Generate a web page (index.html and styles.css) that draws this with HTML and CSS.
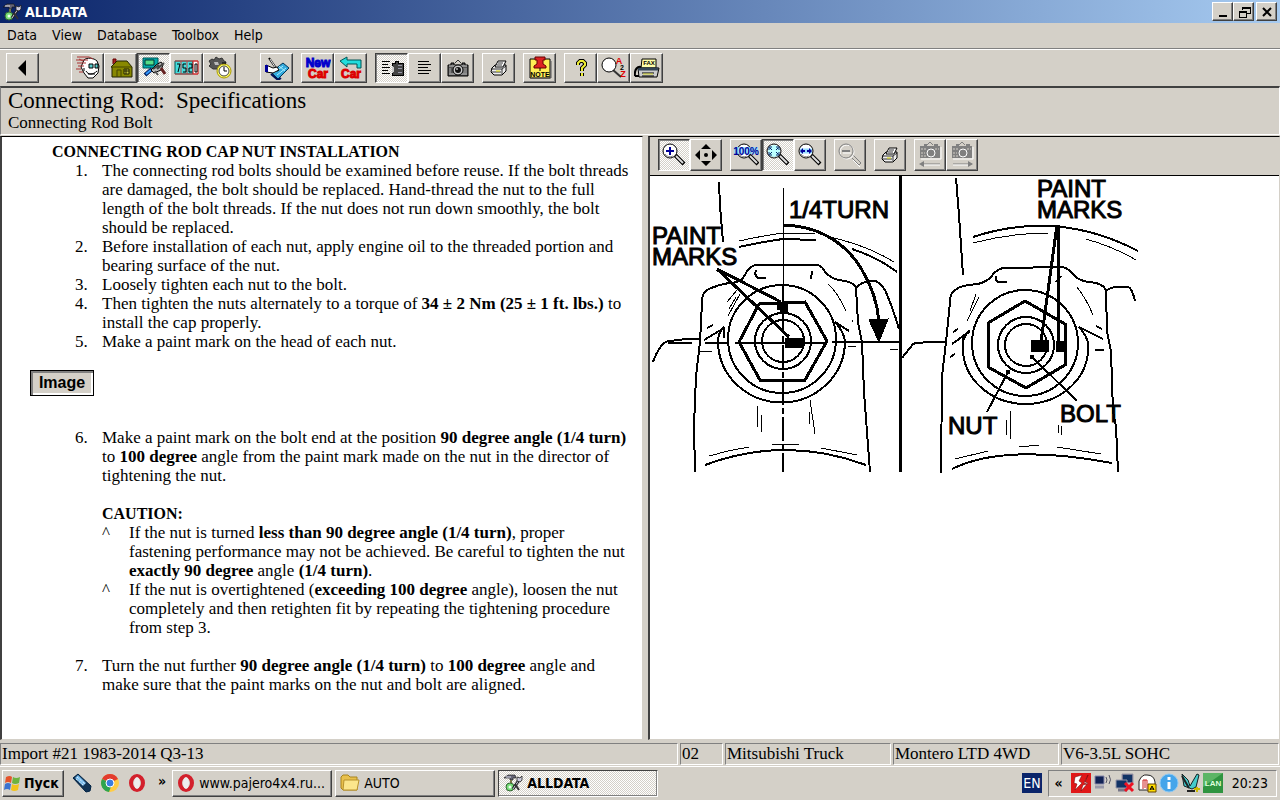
FILE: index.html
```html
<!DOCTYPE html>
<html lang="en">
<head>
    <meta charset="UTF-8">
    <meta name="viewport" content="width=device-width, initial-scale=1.0">
    <title>ALLDATA</title>
    <link rel="stylesheet" href="styles.css">
</head>
<body>
    <!-- shared icon shapes -->
    <svg class="defs" width="0" height="0" aria-hidden="true">
        <symbol id="tools" viewBox="0 0 20 18">
            <path d="M1 4l4-3h7l1 3h-3v2H7V4z" fill="#667" stroke="#111" stroke-width=".6"/>
            <path d="M3 3h5" stroke="#dde"/>
            <path d="M7 6h2v6H7z" fill="#774"/>
            <circle cx="7" cy="13" r="4" fill="#7d7" stroke="#363"/>
            <circle cx="7" cy="13" r="1.5" fill="#efe"/>
            <path d="M10 15l6-9" stroke="#222" stroke-width="3"/>
            <path d="M10 15l6-9" stroke="#ccd" stroke-width="1"/>
            <path d="M14 3v4l3 1 2-2V2l-2 2z" fill="#ccd" stroke="#222" stroke-width=".8"/>
            <path d="M12 10l4 6" stroke="#333" stroke-width="2"/>
        </symbol>
        <symbol id="lens" viewBox="0 0 24 24">
            <path d="M13 12l9 9" stroke="#000" stroke-width="4"/>
            <path d="M14 13l7 7" stroke="#ddd" stroke-width="2"/>
            <circle cx="8" cy="8" r="7" fill="#fff" stroke="#000"/>
            <path d="M3 11a6 6 0 0 0 8 2" fill="none" stroke="#888"/>
        </symbol>
        <symbol id="printer" viewBox="0 0 18 16">
            <path d="M2 8l3-3h11v6l-4 4H4l-3-3z" fill="#eee" stroke="#000"/>
            <path d="M5 7l3-6h8l-3 6z" fill="#fff" stroke="#000"/>
            <path d="M8 3h5M7 5h5M1 9h11v5M12 9l4-3M2 12h9" fill="none" stroke="#000" stroke-width=".8"/>
            <path d="M6 11h4" stroke="#dd0" stroke-width="1"/>
        </symbol>
        <symbol id="camera" viewBox="0 0 22 18">
            <path d="M8 4l3-3 3 3" fill="none" stroke="#333"/>
            <path d="M1 6h3V4h3v2h8V4h3v2h3v11H1z" fill="#555" stroke="#000"/>
            <path d="M2 7h18M2 15h18" stroke="#ccc"/>
            <path d="M3 9v5M17 9v5M19 9v5" stroke="#aaa"/>
            <circle cx="11" cy="11" r="5" fill="#ccc" stroke="#000"/>
            <circle cx="11" cy="11" r="3" fill="#111"/>
            <path d="M9 10h2" stroke="#fff"/>
        </symbol>
        <symbol id="camera-off" viewBox="0 0 24 24">
            <path d="M9 4l3-3 3 3" fill="none" stroke="#808080"/>
            <path d="M2 5h4V3h3v2h7V3h4v2h2v12H2z" fill="#808080"/>
            <path d="M3 8h5M3 12h4M3 15h5M17 8h4" stroke="#d4d0c8" stroke-dasharray="2 1"/>
            <circle cx="13" cy="12" r="4" fill="none" stroke="#fff"/>
            <path d="M3 18h20V6" fill="none" stroke="#fff"/>
        </symbol>
        <symbol id="opera" viewBox="0 0 18 18">
            <ellipse cx="9" cy="9" rx="6" ry="7" fill="none" stroke="#d3202c" stroke-width="4"/>
            <ellipse cx="9" cy="9" rx="3" ry="6" fill="#eee"/>
        </symbol>
        <symbol id="pcs" viewBox="0 0 20 20">
            <path d="M7 1h11v9H7z" fill="#557" stroke="#99a"/>
            <path d="M8 2h9v7H8z" fill="#136"/>
            <path d="M1 7h11v8H1z" fill="#136" stroke="#99a"/>
            <path d="M3 17h9" stroke="#778" stroke-width="3"/>
        </symbol>
    </svg>

    <header class="titlebar">
        <svg class="app-icon" width="20" height="18"><use href="#tools"/></svg>
        <span class="title">ALLDATA</span>
        <div class="window-buttons">
            <button class="win" aria-label="Minimize"><svg width="14" height="12"><path d="M3 10h8" stroke="#000" stroke-width="2"/></svg></button>
            <button class="win" aria-label="Restore"><svg width="14" height="12" shape-rendering="crispEdges"><path d="M5 4V1h8v6h-3M5 2h8M2 5h7v6H2zM2 6h7" fill="none" stroke="#000"/></svg></button>
            <button class="win close" aria-label="Close"><svg width="14" height="12"><path d="M3 2l8 8M11 2l-8 8" stroke="#000" stroke-width="2"/></svg></button>
        </div>
    </header>

    <nav class="menubar">
        <button>Data</button>
        <button>View</button>
        <button>Database</button>
        <button>Toolbox</button>
        <button>Help</button>
    </nav>

    <div class="toolbar">
        <div class="group spaced back">
            <button class="tool" aria-label="Back"><svg width="26" height="24"><path d="M8 12l8-8v16z"/></svg></button>
        </div>
        <div class="group spaced">
            <button class="tool" aria-label="Customer">
                <svg width="26" height="24">
                    <path d="M9 4c3-3 10-2 13 1l2 5-1 7-5 5h-5l-4-5-3-6z" fill="#fff" stroke="#000"/>
                    <path d="M2 1h12l4 2M1 4h12M2 7h9M3 10h6M1 13h5M4 16h4M4 3l4 2" stroke="#a33" fill="none"/>
                    <path d="M14 8h4v4h-4zM20 8h3v4h-3z" fill="#5cc" stroke="#000"/>
                    <path d="M11 15c2 4 7 4 11 0M13 18h7M9 12v3" stroke="#000" fill="none"/>
                </svg>
            </button>
            <button class="tool" aria-label="Shop">
                <svg width="26" height="24">
                    <path d="M5 8V3h3v3" fill="#a22" stroke="#600"/>
                    <path d="M3 11l6-6h10l5 6v10H4V11z" fill="#880" stroke="#220"/>
                    <path d="M3 11h21M9 21v-7h4v7" fill="none" stroke="#440"/>
                    <path d="M16 13h5v5h-5zM18 13v5M16 15h5" fill="#cc4" stroke="#220"/>
                </svg>
            </button>
            <button class="tool on" aria-label="Diagnostics">
                <svg width="26" height="24">
                    <path d="M2 2h15v10H2z" fill="#0aa" stroke="#055"/>
                    <path d="M4 4h9v5H4z" fill="#5d8" stroke="#033"/>
                    <path d="M4 19l7-6" stroke="#026" stroke-width="4"/>
                    <path d="M5 18l5-4" stroke="#39f" stroke-width="2"/>
                    <path d="M10 14l5-5 5-3 2 3-2 5-7 3z" fill="#bbb" stroke="#000"/>
                    <path d="M12 13l6-4M16 13l7-6" stroke="#444" stroke-width="2"/>
                    <path d="M20 12l4 6" stroke="#622" stroke-width="3"/>
                    <path d="M14 15l3 4" stroke="#555" stroke-width="2"/>
                </svg>
            </button>
            <button class="tool" aria-label="Codes 7520">
                <svg width="26" height="24">
                    <path d="M1 5h18v13H1z" fill="#4dd" stroke="#055"/>
                    <path d="M19 5h5v13h-5z" fill="#fff" stroke="#c00"/>
                    <path d="M7 5v13M13 5v13M1 5h23M1 18h23" stroke="#c44"/>
                    <path d="M3 8h3l-2 8M12 8H9v4h3v4H9M15 8h3v4h-3v4h3M21 8h2v8h-2z" fill="none" stroke="#000"/>
                </svg>
            </button>
            <button class="tool" aria-label="Labor times">
                <svg width="26" height="24">
                    <path d="M2 5l3-2 2 1 2-3 3 2 3-1 2 3 2 1-1 4-4 3H6L2 10l2-2z" fill="#555" stroke="#333"/>
                    <path d="M7 6h4l1 3H8z" fill="#bbb"/>
                    <circle cx="17" cy="15" r="7" fill="#ff6" stroke="#a90"/>
                    <circle cx="17" cy="15" r="5" fill="#fff" stroke="#444"/>
                    <path d="M17 11v4h3M15 7h4" fill="none" stroke="#000"/>
                </svg>
            </button>
        </div>
        <div class="group">
            <button class="tool" aria-label="Notes">
                <svg width="26" height="24">
                    <path d="M7 16l12-9 6 5-11 11z" fill="#3ad" stroke="#035"/>
                    <path d="M10 17l9-7M13 19l9-7M15 10l6 5" stroke="#aef"/>
                    <path d="M14 15L5 2" stroke="#000" stroke-width="2"/>
                    <path d="M13 14L6 3" stroke="#eee"/>
                    <path d="M2 9l7 3 4-1 2 3-6 3-7-1z" fill="#fff" stroke="#000"/>
                    <path d="M1 9h3v7H1z" fill="#009"/>
                    <path d="M7 18l7 6 3-2" fill="none" stroke="#015" stroke-width="2"/>
                </svg>
            </button>
        </div>
        <div class="group">
            <button class="tool" aria-label="New Car">
                <svg width="26" height="26">
                    <text class="new" x="13" y="12">New</text>
                    <text class="car" x="13" y="23">Car</text>
                </svg>
            </button>
            <button class="tool" aria-label="Previous Car">
                <svg width="26" height="26">
                    <path d="M2 6l7-4v3h14v8h-4V9H9v3z" fill="#2dd" stroke="#055"/>
                    <text class="car" x="13" y="23">Car</text>
                </svg>
            </button>
        </div>
        <div class="group">
            <button class="tool on" aria-label="Text and images">
                <svg width="26" height="24" shape-rendering="crispEdges">
                    <path d="M3 5h8M3 8h6M3 11h8M3 14h6M3 17h8" stroke="#000"/>
                    <path d="M13 7h3V5h3v2h5v12H13z" fill="#444" stroke="#000"/>
                    <path d="M13 10a4 4 0 0 1 0 7z" fill="#ccc"/>
                    <path d="M19 9h4M19 12h4M19 16h4" stroke="#99a"/>
                </svg>
            </button>
            <button class="tool" aria-label="Text only">
                <svg width="26" height="24" shape-rendering="crispEdges"><path d="M6 5h11M6 8h13M6 11h10M6 14h13M6 17h11" stroke="#000"/></svg>
            </button>
            <button class="tool" aria-label="Images only"><svg width="22" height="18"><use href="#camera"/></svg></button>
        </div>
        <div class="group">
            <button class="tool" aria-label="Print"><svg width="18" height="16"><use href="#printer"/></svg></button>
        </div>
        <div class="group">
            <button class="tool" aria-label="Note">
                <svg width="26" height="24">
                    <path d="M3 3h20v19H3z" fill="#fe5" stroke="#000"/>
                    <path d="M4 22h20V5" fill="none" stroke="#555"/>
                    <path d="M8 1h10v3h-2v4l3 2v2H7v-2l3-2V4H8z" fill="#d22" stroke="#600"/>
                    <path d="M13 12v3" stroke="#000"/>
                    <text class="note" x="13" y="21">NOTE</text>
                </svg>
            </button>
        </div>
        <div class="group">
            <button class="tool" aria-label="Help">
                <svg width="26" height="24">
                    <path d="M10 9V7l2-2h3l2 2v2l-3 3v3M14 17v3" fill="none" stroke="#000" stroke-width="4"/>
                    <path d="M10 9V7l2-2h3l2 2v2l-3 3v3M14 17v3" fill="none" stroke="#ee3" stroke-width="2"/>
                </svg>
            </button>
            <button class="tool" aria-label="Search A to Z">
                <svg width="26" height="24">
                    <path d="M12 14l8 7" stroke="#333" stroke-width="2"/>
                    <circle cx="8" cy="9" r="7" fill="#fff" stroke="#000"/>
                    <text class="az" x="18" y="8">A</text>
                    <text class="two" x="21" y="14">2</text>
                    <text class="az" x="22" y="21">Z</text>
                </svg>
            </button>
            <button class="tool" aria-label="Fax">
                <svg width="26" height="24">
                    <path d="M8 3h14v9H7z" fill="#ffa" stroke="#000"/>
                    <text class="fax" x="15" y="9">FAX</text>
                    <path d="M4 12h21l-2 9H5z" fill="#ccc" stroke="#000"/>
                    <path d="M4 13h20" stroke="#345" stroke-width="3"/>
                    <path d="M8 17h12M8 20h12" stroke="#000"/>
                    <path d="M9 18h10" stroke="#dd3"/>
                    <path d="M1 20c-1-7 3-10 6-9M1 20h4" fill="none" stroke="#000" stroke-width="2"/>
                </svg>
            </button>
        </div>
    </div>

    <div class="heading">
        <h1>Connecting Rod:&nbsp; Specifications</h1>
        <p>Connecting Rod Bolt</p>
    </div>

    <main class="panes">
        <article class="doc">
            <h2>CONNECTING ROD CAP NUT INSTALLATION</h2>
            <ol class="steps">
                <li><p>The connecting rod bolts should be examined before reuse. If the bolt threads are damaged, the bolt should be replaced. Hand-thread the nut to the full length of the bolt threads. If the nut does not run down smoothly, the bolt should be replaced.</p></li>
                <li><p>Before installation of each nut, apply engine oil to the threaded portion and bearing surface of the nut.</p></li>
                <li><p>Loosely tighten each nut to the bolt.</p></li>
                <li><p>Then tighten the nuts alternately to a torque of <b>34 ± 2 Nm (25 ± 1 ft. lbs.)</b> to install the cap properly.</p></li>
                <li><p>Make a paint mark on the head of each nut.</p></li>
            </ol>
            <button class="image-button">Image</button>
            <ol class="steps from-six">
                <li>
                    <div>
                        <p>Make a paint mark on the bolt end at the position <b>90 degree angle (1/4 turn)</b> to <b>100 degree</b> angle from the paint mark made on the nut in the director of tightening the nut.</p>
                        <h3>CAUTION:</h3>
                        <ul class="carets">
                            <li><p>If the nut is turned <b>less than 90 degree angle (1/4 turn)</b>, proper fastening performance may not be achieved. Be careful to tighten the nut <b>exactly 90 degree</b> angle <b>(1/4 turn)</b>.</p></li>
                            <li><p>If the nut is overtightened (<b>exceeding 100 degree</b> angle), loosen the nut completely and then retighten fit by repeating the tightening procedure from step 3.</p></li>
                        </ul>
                    </div>
                </li>
                <li><p>Turn the nut further <b>90 degree angle (1/4 turn)</b> to <b>100 degree</b> angle and make sure that the paint marks on the nut and bolt are aligned.</p></li>
            </ol>
        </article>

        <section class="viewer">
            <div class="viewer-bar">
                <div class="group">
                    <button class="tool" aria-pressed="true" aria-label="Zoom in"><svg width="24" height="24"><use href="#lens"/><path d="M4 8h8M8 4v8" stroke="#009" stroke-width="2"/></svg></button>
                    <button class="tool" aria-label="Pan"><svg width="24" height="24"><path d="M12 1l5 5H7zM12 23l5-5H7zM1 12l5-5v10zM23 12l-5-5v10z"/><circle cx="12" cy="12" r="2"/></svg></button>
                </div>
                <div class="group">
                    <button class="tool" aria-label="Zoom 100%"><svg width="26" height="24"><use href="#lens" x="3" width="24" height="24"/><path d="M1 4h24v7H1z" fill="#8df" opacity=".8"/><text class="hundred" x="13" y="12">100%</text></svg></button>
                    <button class="tool" aria-pressed="true" aria-label="Fit to window"><svg width="24" height="24"><use href="#lens"/><circle cx="8" cy="8" r="6" fill="#bff"/><path d="M3 7V4h3M10 4h3v3M13 9v3h-3M6 12H3V9M6 7l-2-2M10 7l2-2M6 9l-2 2M10 9l2 2" fill="none" stroke="#026"/></svg></button>
                    <button class="tool" aria-label="Fit to width"><svg width="24" height="24"><use href="#lens"/><path d="M2 8h12" stroke="#9df" stroke-width="5"/><path d="M2 8l3-3v6zM14 8l-3-3v6z" fill="#009"/><path d="M3 8h4M9 8h4" stroke="#009" stroke-width="2"/></svg></button>
                </div>
                <div class="group">
                    <button class="tool" disabled aria-label="Zoom out"><svg width="24" height="24"><path d="M14 15l7 7 2-2-8-8" fill="none" stroke="#808080"/><circle cx="9" cy="9" r="7" fill="none" stroke="#fff"/><circle cx="8" cy="8" r="7" fill="none" stroke="#808080"/><path d="M4 8h8" stroke="#808080" stroke-width="2"/><path d="M5 10h8M15 17l7 7" stroke="#fff"/></svg></button>
                </div>
                <div class="group">
                    <button class="tool" aria-label="Print image"><svg width="18" height="16"><use href="#printer"/></svg></button>
                </div>
                <div class="group">
                    <button class="tool" disabled aria-label="Previous image"><svg width="24" height="26"><use href="#camera-off" width="24" height="24" y="-1"/><path d="M3 22h19" stroke="#808080"/><path d="M1 22l5-3v6z" fill="#808080"/><path d="M6 23h16" stroke="#fff"/></svg></button>
                    <button class="tool" disabled aria-label="Next image"><svg width="24" height="26"><use href="#camera-off" width="24" height="24" y="-1"/><path d="M3 22h19" stroke="#808080"/><path d="M23 22l-5-3v6z" fill="#808080"/><path d="M3 23h15" stroke="#fff"/></svg></button>
                </div>
            </div>
            <svg class="diagram" width="490" height="300" viewBox="650 176 490 300" role="img" aria-label="Paint marks on nut and bolt">
                <!-- nut before the quarter turn -->
                <path class="mid" d="M719 182l1 24 3 36"/>
                <path d="M783 188v97M739 241q22-5 44-8h32M825 236q40 8 69 26"/>
                <path class="mid" d="M739 247q22-5 44-8l33 1M852 249q25 8 45 23"/>
                <path class="heavy" d="M783 225c40 1 66 22 79 45q15 25 17 52"/>
                <path class="fill" d="M869 320l19-1-9 23z"/>
                <path class="mid" d="M707 290q10-5 22-7 12 0 16-8 4-9 11-10h60q6 0 9 7 7 8 20 9 9 2 11 7 6-7 16-7 7-1 13 9 8 18 14 39"/>
                <path class="mid" d="M707 290q-5 3-5 12l-2 40-4 34-2 50 1 46M856 288l2 34 4 20 2 50 6 80"/>
                <path class="mid" d="M756 270q-2 6 2 8h8M812 271l-1 8M653 362q8-22 18-21 8-2 29-2"/>
                <path class="mid" d="M668 343h24M705 343h22M735 343h90M832 342h40M872 342h30"/>
                <path d="M890 349h8M700 351h12M848 346h8"/>
                <path class="mid" d="M783 285v24"/>
                <path class="mid" stroke-dasharray="24 3 6 3" d="M783 309v163"/>
                <circle class="mid" cx="782" cy="339" r="54"/>
                <path class="mid" d="M724 327q-6 6-6 14a63 61 0 0 0 127 0q-1-9-10-19M704 340l20-12v10M707 328l6-3M835 322l14 9"/>
                <circle class="mid" cx="783" cy="341" r="28"/>
                <circle class="mid" cx="783" cy="341" r="21"/>
                <path class="heavy" d="M739 342l20-38 46-2 22 39-22 39h-45z"/>
                <path class="fill" d="M785 338h18v9h-18zM777 302h10v11h-7v-4h-3z"/>
                <path class="heavy" d="M717 269l72 68M717 269l64 33"/>
                <path d="M737 290l-10 12M736 297l-7 12M740 294l-12 22M828 284q10 9 18 27M852 320v2"/>
                <path d="M758 406l-1 22M761 415v17M810 400l5 34M809 412v12M709 456q20-6 40-9M772 445l27-1M821 448l36 7"/>
                <path class="mid" d="M705 465q80-30 161 0"/>
                <path class="heavy" d="M900 176v296"/>

                <!-- nut after the quarter turn -->
                <path class="mid" d="M956 178l3 37 4 60"/>
                <path d="M973 243q38-10 75-10M1086 239q28 8 50 21"/>
                <path class="mid" d="M973 237q85-28 165 14M902 358l11-14q4-2 32-2"/>
                <path class="mid" d="M955 290q6-5 23-6 8-2 13-7 6-9 14-9l58-1q6 2 11 8 5 6 15 7 15 1 17 9 4-4 12-4h10q4 1 7 14"/>
                <path class="mid" d="M955 290q-5 3-5 12l-4 40-4 34-1 97M1106 291l1 40 4 20 2 60 3 15 2 46"/>
                <path class="mid" d="M996 276q-1 6 3 6h8M1061 276l-5 6M952 344l18-13M963 344q-2-6 7-13M1079 327l24 12M953 332l5-3M950 357l5-3M1095 350h9M1096 326l6 3"/>
                <circle class="mid" cx="1025" cy="343" r="53"/>
                <path class="mid" d="M969 331q-7 7-6 16a62 55 0 0 0 125 3q2-11-9-23"/>
                <circle class="mid" cx="1026" cy="345" r="28"/>
                <circle class="mid" cx="1026" cy="345" r="21"/>
                <path class="heavy" d="M1025 301l40 23v41l-39 23-38-21v-44z"/>
                <path class="fill" d="M1031 340h17v11h-17zM1056 341h9v10h-9z"/>
                <path class="heavy" d="M1057 225l-16 117M1058 225l1 117"/>
                <path class="mid" d="M1032 357l45 44M1008 372l-21 40"/>
                <circle class="fill" cx="1032" cy="357" r="2"/>
                <circle class="fill" cx="1008" cy="372" r="2"/>
                <path d="M976 294l-6 17M979 297l-12 24M1077 287q10 13 16 28M1010 411v28M1006 420v15M1058 425v8M1061 426l1 9M955 459l33-8M1019 447l20-2M1057 447l44 7"/>
                <path class="mid" d="M952 469q52-26 160-6"/>

                <text x="789" y="218">1/4TURN</text>
                <text x="652" y="244">PAINT</text>
                <text x="652" y="265">MARKS</text>
                <text x="1037" y="197">PAINT</text>
                <text x="1037" y="218">MARKS</text>
                <text x="948" y="434">NUT</text>
                <text x="1060" y="422">BOLT</text>
            </svg>
        </section>
    </main>

    <footer class="status">
        <span class="import">Import #21 1983-2014 Q3-13</span>
        <span class="year">02</span>
        <span class="make">Mitsubishi Truck</span>
        <span class="model">Montero LTD 4WD</span>
        <span class="engine">V6-3.5L SOHC</span>
    </footer>

    <div class="taskbar">
        <button class="start" lang="ru">
            <svg width="19" height="18"><path d="M3 3q4-2 6 0l-1 6q-3-2-6 0z" fill="#e5532b"/><path d="M10 3q3 2 7 0l-1 6q-4 2-7 0z" fill="#6db33f"/><path d="M2 10q3-2 6 0l-1 6q-3-2-6 0z" fill="#3b73d1"/><path d="M9 10q3 2 7 0l-1 6q-4 2-7 0z" fill="#f2c31b"/></svg>
            Пуск
        </button>
        <div class="quick">
            <button aria-label="Show desktop"><svg width="20" height="20"><path d="M1 5l5-4 13 12-1 5-4 1z" fill="#135" stroke="#024"/><path d="M3 5l3-3 8 8-3 3z" fill="#7be"/><path d="M5 4l8 7M4 6l7 6" stroke="#fff" stroke-dasharray="1 1"/></svg></button>
            <button aria-label="Chrome"><svg width="20" height="20"><circle cx="10" cy="10" r="9" fill="#fc4"/><path d="M10 10L2 6a9 9 0 0 1 16 0z" fill="#e33b2e"/><path d="M2 6a9 9 0 0 0 7 13l3-8z" fill="#2ea44f"/><circle cx="10" cy="10" r="4" fill="#3a7de0" stroke="#fff"/></svg></button>
            <button aria-label="Opera"><svg width="18" height="18"><use href="#opera"/></svg></button>
            <button class="more" aria-label="More">»</button>
        </div>
        <div class="tasks">
            <button class="task"><svg width="18" height="18"><use href="#opera"/></svg>www.pajero4x4.ru...</button>
            <button class="task"><svg width="20" height="18"><path d="M1 3l2-2h5l2 2h7v13H3l-2-2z" fill="#e8c04c" stroke="#a8841c"/><path d="M4 6h15l-2 10H3z" fill="#fbe68c" stroke="#b8922c"/></svg>AUTO</button>
            <button class="task active"><svg width="20" height="18"><use href="#tools"/></svg>ALLDATA</button>
        </div>
        <span class="lang">EN</span>
        <div class="tray">
            <span class="chevron">«</span>
            <svg width="20" height="20"><path d="M0 0h20v20H0z" fill="#e01818"/><path d="M4 4l7-2-3 6 3 2-7 7 2-6-3-1zM17 2l-3 7 3 1-7 8 2-6 4-1-3-1z" fill="#fff" stroke="#600" stroke-width=".5"/></svg>
            <svg width="20" height="20"><path d="M2 3h9v8H2z" fill="#125" stroke="#88a"/><path d="M2 14h9" stroke="#99a" stroke-width="3"/><path d="M13 4q2 3 0 6M16 2q3 5 0 9" fill="none" stroke="#556"/></svg>
            <svg width="20" height="20"><use href="#pcs"/><path d="M10 10l8 8M18 10l-8 8" stroke="#e12" stroke-width="3"/></svg>
            <svg width="20" height="20"><path d="M2 17V8q3-7 8-6 7 0 8 7v8z" fill="#fff" stroke="#222"/><path d="M6 16V7h4v9M8 7v8" stroke="#c22" fill="none"/><path d="M11 11h8v8h-8z" fill="#fd0" stroke="#640"/><path d="M13 17l2-4 2 4M13 16h4" stroke="#000" fill="none"/></svg>
            <svg width="20" height="20"><circle cx="10" cy="10" r="9" fill="#45a5ea" stroke="#8cc8f4"/><path d="M10 9v7M10 4v3" stroke="#fff" stroke-width="3"/></svg>
            <svg width="20" height="20"><path d="M1 1l6 6 2 6 7-12 2 1-3 12-4 2-8-3z" fill="#4cc" stroke="#122"/><path d="M1 3l7 12M6 18h8" stroke="#222" stroke-width="2"/><path d="M13 16h6M16 14v5" stroke="#cb0" stroke-width="2"/></svg>
            <svg width="20" height="20"><path d="M0 0h20v20H0z" fill="#2f9440"/><path d="M0 0h20L0 14z" fill="#5cb565"/><text class="lan" x="10" y="13">LAN</text></svg>
            <time>20:23</time>
        </div>
    </div>
</body>
</html>
```
FILE: styles.css
```css
* {
    box-sizing: border-box;
}
body {
    margin: 0;
    min-height: 100vh;
    display: flex;
    flex-direction: column;
    background: #d4d0c8;
    color: #000;
    font-family: "Liberation Serif", "Times New Roman", serif;
    font-size: 17px;
    line-height: 19px;
}
h1, h2, h3, p, ol, ul {
    margin: 0;
    padding: 0;
}
button {
    background: none;
    border: none;
    padding: 0;
    color: #000;
    font-family: "DejaVu Sans Condensed", "DejaVu Sans", sans-serif;
    font-size: 14px;
}
svg {
    display: block;
    flex: none;
}
.defs {
    position: absolute;
}

/* title bar */
.titlebar {
    display: flex;
    align-items: center;
    height: 23px;
    padding: 0 3px 0 2px;
    background: linear-gradient(to right, #0a246a, #a6caf0);
}
.title {
    flex: 1;
    padding-left: 3px;
    color: #fff;
    font: bold 14px "DejaVu Sans Condensed", "DejaVu Sans", sans-serif;
}
.window-buttons {
    display: flex;
}
.win {
    display: grid;
    place-items: center;
    width: 21px;
    height: 19px;
    background: #d4d0c8;
    border: 1px solid;
    border-color: #fff #404040 #404040 #fff;
    box-shadow: inset -1px -1px #808080;
}
.close {
    margin-left: 2px;
}

/* menu */
.menubar {
    display: flex;
    gap: 15px;
    height: 26px;
    padding: 0 7px 2px;
    border-bottom: 1px solid #808080;
}

/* toolbar */
.toolbar {
    display: flex;
    gap: 8px;
    height: 37px;
    padding: 3px 6px;
    border-top: 1px solid #fff;
}
.group {
    display: flex;
}
.spaced {
    padding-right: 16px;
}
.back {
    margin-right: 8px;
}
.tool {
    display: grid;
    place-items: center;
    width: 33px;
    height: 30px;
    border: 1px solid;
    border-color: #fff #404040 #404040 #fff;
    box-shadow: inset -1px -1px #808080;
}
.tool.on, .tool[aria-pressed="true"], .active {
    background: repeating-conic-gradient(#fff 0 25%, #d4d0c8 0 50%) 0 0 / 2px 2px;
    border-color: #404040 #fff #fff #404040;
    box-shadow: inset 1px 1px #808080;
}
.tool text {
    font-family: "Liberation Sans", Arial, sans-serif;
    font-weight: bold;
    text-anchor: middle;
}
.tool .new, .tool .car {
    font-size: 12px;
    fill: #00c;
    stroke: #00c;
    stroke-width: 1px;
}
.tool .car {
    fill: #d00;
    stroke: #d00;
}
.tool .note {
    font-size: 7px;
}
.tool .az {
    font-size: 9px;
    fill: #d00;
}
.tool .two {
    font-size: 7px;
}
.tool .fax {
    font-size: 6px;
}
.tool .hundred {
    font-size: 10px;
    fill: #009;
}

/* page heading */
.heading {
    height: 49px;
    padding: 1px 7px;
    border: 1px solid;
    border-color: #404040 #fff #fff #808080;
    border-top-width: 2px;
}
.heading h1 {
    font-size: 23px;
    font-weight: normal;
    line-height: 24px;
}

/* panes */
.panes {
    flex: 1;
    display: grid;
    grid-template-columns: 643fr 632fr;
    gap: 5px;
    margin-top: 1px;
}
.doc, .viewer {
    background: #fff;
    border: 1px solid #000;
    border-width: 1px 1px 1px 2px;
    border-color: #000 #d4d0c8 #d4d0c8 #404040;
    min-width: 0;
}
.doc {
    padding: 5px 12px 18px 50px;
}
.doc h2 {
    font-size: 16px;
}
.steps {
    list-style: none;
    counter-reset: step;
    padding-left: 23px;
}
.steps > li, .carets > li {
    display: grid;
    grid-template-columns: 27px 1fr;
}
.steps > li::before {
    counter-increment: step;
    content: counter(step) ".";
}
.from-six {
    counter-reset: step 5;
}
.from-six > li {
    margin-bottom: 19px;
}
.image-button {
    display: block;
    margin: 19px 0 32px -22px;
    width: 64px;
    height: 26px;
    background: #d4d0c8;
    border: 1px solid #000;
    box-shadow: inset 2px 2px #808080, inset -2px -2px #fff;
    font: bold 16px "Liberation Sans", Arial, sans-serif;
}
.doc h3 {
    margin-top: 19px;
    font-size: 16px;
}
.carets {
    list-style: none;
}
.carets > li::before {
    content: "^";
}
.viewer-bar {
    display: flex;
    gap: 8px;
    height: 39px;
    padding: 2px 8px;
    background: #d4d0c8;
    border-bottom: 1px solid #000;
}
.viewer-bar .tool {
    width: 32px;
    height: 32px;
}
.diagram {
    fill: none;
    stroke: #000;
    stroke-width: 1px;
    shape-rendering: crispEdges;
}
.diagram .mid {
    stroke-width: 2px;
}
.diagram .heavy {
    stroke-width: 3px;
}
.diagram .fill {
    fill: #000;
}
.diagram text {
    font: 24px "Liberation Sans", Arial, sans-serif;
    fill: #000;
}

/* status bar */
.status {
    display: flex;
    gap: 2px;
    padding: 3px 1px 1px 0;
    border-bottom: 1px solid #fff;
}
.status span {
    height: 22px;
    padding: 0 1px;
    border: 1px solid;
    border-color: #808080 #fff #fff #808080;
    white-space: nowrap;
}
.import {
    flex: 1;
}
.year {
    width: 43px;
}
.make, .model {
    width: 166px;
}
.engine {
    width: 218px;
}

/* taskbar */
.taskbar {
    display: flex;
    align-items: center;
    height: 33px;
    padding: 0 3px 1px 2px;
    font: 14px "DejaVu Sans Condensed", "DejaVu Sans", sans-serif;
}
.start, .task {
    display: flex;
    align-items: center;
    height: 27px;
    border: 1px solid;
    border-color: #fff #404040 #404040 #fff;
    box-shadow: inset -1px -1px #808080;
}
.start {
    width: 62px;
    gap: 2px;
    font-weight: bold;
}
.quick {
    display: flex;
    align-items: center;
    gap: 8px;
    padding: 0 6px 0 8px;
}
.more {
    align-self: flex-start;
    padding-left: 4px;
    font-weight: bold;
}
.tasks {
    flex: 1;
    display: flex;
    gap: 3px;
}
.task {
    width: 160px;
    padding: 0 4px;
    gap: 4px;
    white-space: nowrap;
}
.active {
    font-weight: bold;
    border-color: #404040 #fff #fff #404040;
}
.lang {
    padding: 2px 1px;
    background: #0a246a;
    color: #fff;
}
.tray {
    display: flex;
    align-items: center;
    gap: 2px;
    height: 27px;
    margin-left: 6px;
    padding: 0 8px 0 6px;
    border: 1px solid;
    border-color: #808080 #fff #fff #808080;
}
.chevron {
    padding-right: 6px;
    font-weight: bold;
}
.tray time {
    padding-left: 7px;
}
.lan {
    font: bold 8px "Liberation Sans", Arial, sans-serif;
    fill: #dfd;
    text-anchor: middle;
}
```
